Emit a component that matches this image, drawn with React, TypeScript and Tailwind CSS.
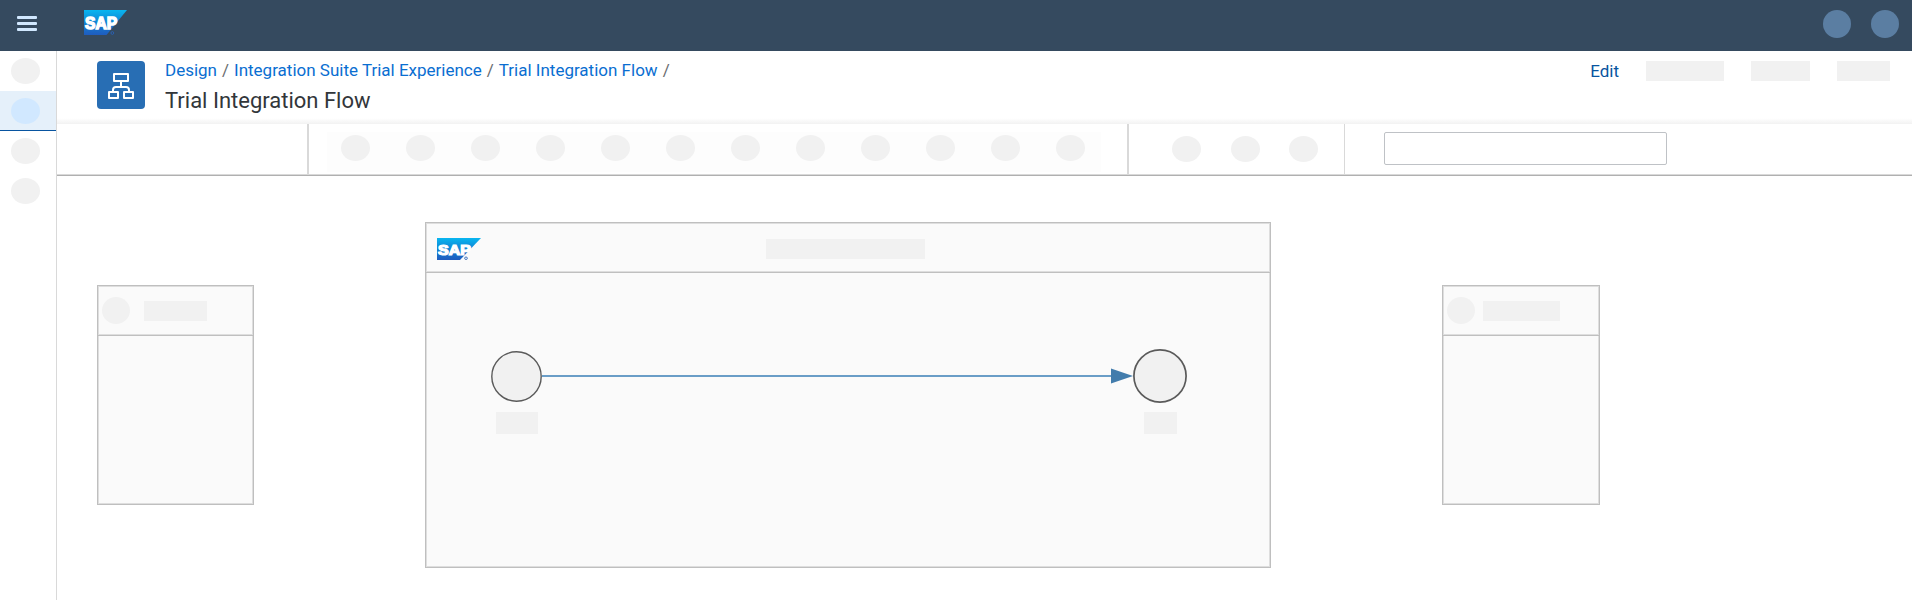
import { useId, type ReactNode } from "react";

function SapLogo({ className }: { className: string }) {
  const id = useId();
  return (
    <svg viewBox="0 0 44 25" preserveAspectRatio="none" className={className} role="img" aria-label="SAP">
      <defs>
        <linearGradient id={id} x1="0" y1="0" x2="0" y2="1">
          <stop offset="0" stopColor="#08b6f0" />
          <stop offset="0.5" stopColor="#1283d3" />
          <stop offset="1" stopColor="#1f5cbf" />
        </linearGradient>
      </defs>
      <path d="M0 0H44L23 25H0Z" fill={`url(#${id})`} />
      <text
        x="1"
        y="19"
        fontFamily="'Liberation Sans', Arial, sans-serif"
        fontWeight="700"
        fontSize="16"
        fill="#fff"
        stroke="#fff"
        strokeWidth="1.4"
      >
        SAP
      </text>
      <circle cx="29" cy="23" r="1.4" fill="none" stroke="#2a62b8" strokeWidth="0.9" />
    </svg>
  );
}

function FlowIcon() {
  return (
    <svg viewBox="0 0 48 48" className="size-12" fill="none" stroke="#fff" strokeWidth="2" strokeLinejoin="round" aria-hidden="true">
      <rect x="17" y="13" width="14" height="7" />
      <rect x="12" y="31" width="9" height="6" />
      <rect x="27" y="31" width="9" height="6" />
      <path d="M24 20V26M16 31V29Q16 26 19 26H29Q32 26 32 29V31" />
    </svg>
  );
}

function Dot() {
  return <span className="block h-[26px] w-[29px] shrink-0 rounded-[50%] bg-[#f1f1f1]" />;
}

function SideItem({ active = false }: { active?: boolean }) {
  return (
    <li
      className={
        active
          ? "flex h-10 items-center border-b border-[#0854a0] bg-[#e5f0fa] pl-[11px]"
          : "flex h-10 items-center pl-[11px]"
      }
    >
      <span
        className={
          active
            ? "block h-[26px] w-[29px] rounded-[50%] bg-[#d1e8ff]"
            : "block h-[26px] w-[29px] rounded-[50%] bg-[#f1f1f1]"
        }
      />
    </li>
  );
}

function Pool({ className, header, children }: { className: string; header: ReactNode; children?: ReactNode }) {
  return (
    <section
      className={`absolute flex flex-col border border-[#bfbfbf] bg-[#fafafa] shadow-[inset_0_0_0_1px_#dedede] ${className}`}
    >
      <div className="flex h-[50px] shrink-0 items-center border-b border-[#bfbfbf] shadow-[inset_0_0_0_1px_#dedede]">
        {header}
      </div>
      {children}
    </section>
  );
}

export default function App() {
  return (
    <div className="flex min-h-screen flex-col bg-white font-['Roboto','Liberation_Sans',sans-serif] text-[17px] leading-5">
      <header className="flex h-[51px] shrink-0 items-center bg-[#354a5f] pr-[13px] pl-[17px]">
        <button type="button" aria-label="Menu" className="-mt-1 flex w-5 flex-col gap-[3px]">
          <span className="h-[3px] rounded-[1px] bg-[#d1e8ff]" />
          <span className="h-[3px] rounded-[1px] bg-[#d1e8ff]" />
          <span className="h-[3px] rounded-[1px] bg-[#d1e8ff]" />
        </button>
        <SapLogo className="-mt-1.5 ml-[47px] h-[25px] w-[43px]" />
        <div className="-mt-1 ml-auto flex gap-5">
          <span className="size-7 rounded-full bg-[#5b7ea2]" />
          <span className="size-7 rounded-full bg-[#5b7ea2]" />
        </div>
      </header>

      <div className="flex flex-1">
        <nav aria-label="Sections" className="w-[57px] shrink-0 border-r border-[#d9d9d9]">
          <ul>
            <SideItem />
            <SideItem active />
            <SideItem />
            <SideItem />
          </ul>
        </nav>

        <div className="flex min-w-0 flex-1 flex-col">
          <div className="flex h-[73px] shrink-0 items-start bg-linear-to-b from-white from-92% to-[#f2f2f2] pt-2.5 pr-[22px] pl-10">
            <span className="rounded bg-[#286eb4]">
              <FlowIcon />
            </span>
            <div className="ml-5">
              <nav aria-label="Breadcrumb" className="flex gap-[5px] leading-[18px] whitespace-nowrap text-[#6a6d70]">
                <a href="#design" className="text-[#0a6ed1]">Design</a>
                <span>/</span>
                <a href="#package" className="text-[#0a6ed1]">Integration Suite Trial Experience</a>
                <span>/</span>
                <a href="#flow" className="text-[#0a6ed1]">Trial Integration Flow</a>
                <span>/</span>
              </nav>
              <h1 className="mt-2 text-[22px] leading-7 whitespace-nowrap text-[#32363a]">Trial Integration Flow</h1>
            </div>
            <div className="ml-auto flex items-center">
              <button type="button" className="mr-[27px] text-[#0854a0]">Edit</button>
              <div className="flex items-center gap-[27px]">
                <span className="h-5 w-[78px] bg-[#f1f1f1]" />
                <span className="h-5 w-[59px] bg-[#f1f1f1]" />
                <span className="h-5 w-[53px] bg-[#f1f1f1]" />
              </div>
            </div>
          </div>

          <div className="flex h-[52px] shrink-0 border-b border-[#b0b0b0] shadow-[inset_0_-1px_0_0_#d9d9d9]">
            <div className="w-[252px] shrink-0 border-r-2 border-[#d9d9d9]" />
            <div className="w-[820px] shrink-0 border-r-2 border-[#d9d9d9] py-2 pr-[26px] pl-[18px]">
              <div className="flex h-10 justify-between bg-[#fdfdfd] pt-[3px] pr-4 pl-3.5">
                <Dot />
                <Dot />
                <Dot />
                <Dot />
                <Dot />
                <Dot />
                <Dot />
                <Dot />
                <Dot />
                <Dot />
                <Dot />
                <Dot />
              </div>
            </div>
            <div className="flex w-[216px] shrink-0 items-start justify-between border-r border-[#d9d9d9] pt-3 pr-[26px] pl-[43px]">
              <Dot />
              <Dot />
              <Dot />
            </div>
            <div className="pt-2 pl-[39px]">
              <input
                type="text"
                aria-label="Search"
                className="block h-[33px] w-[283px] rounded-xs border border-[#bfc2c6] bg-white px-2 outline-none"
              />
            </div>
          </div>

          <main className="relative min-h-[424px] flex-1">
            <Pool
              className="top-[109px] left-[40px] h-[220px] w-[157px]"
              header={
                <div className="flex items-center gap-3.5 pl-1">
                  <span className="h-[27px] w-[28px] rounded-[50%] bg-[#f1f1f1]" />
                  <span className="h-5 w-[63px] bg-[#f1f1f1]" />
                </div>
              }
            />

            <Pool
              className="top-[46px] left-[368px] h-[346px] w-[846px]"
              header={
                <div className="grid w-full grid-cols-[1fr_auto_1fr] items-center pt-0.5 pr-4 pl-[11px]">
                  <SapLogo className="h-[22px] w-11" />
                  <span className="h-5 w-[159px] bg-[#f1f1f1]" />
                </div>
              }
            >
              <div className="flex justify-between pt-[75px] pr-[83px] pl-[65px]">
                <div className="flex shrink-0 flex-col items-center">
                  <div className="flex h-14 items-center">
                    <svg viewBox="0 0 51 51" className="size-[51px]" aria-hidden="true">
                      <circle cx="25.5" cy="25.5" r="24.7" fill="#f1f1f1" stroke="#5a5a5a" strokeWidth="1.4" />
                    </svg>
                  </div>
                  <span className="mt-2 h-[22px] w-[42px] bg-[#f1f1f1]" />
                </div>
                <div className="flex h-14 min-w-0 flex-1 items-center">
                  <span className="h-0.5 flex-1 bg-[#6a9dc7]" />
                  <svg viewBox="0 0 22 16" className="h-4 w-[22px] shrink-0" aria-hidden="true">
                    <path d="M0 0.5L22 8L0 15.5Z" fill="#427cac" />
                  </svg>
                </div>
                <div className="flex shrink-0 flex-col items-center">
                  <div className="flex h-14 items-center">
                    <svg viewBox="0 0 54 54" className="size-[54px]" aria-hidden="true">
                      <circle cx="27" cy="27" r="26.1" fill="#f1f1f1" stroke="#5a5a5a" strokeWidth="1.7" />
                    </svg>
                  </div>
                  <span className="mt-2 h-[22px] w-[33px] bg-[#f1f1f1]" />
                </div>
              </div>
            </Pool>

            <Pool
              className="top-[109px] left-[1385px] h-[220px] w-[158px]"
              header={
                <div className="flex items-center gap-2 pl-1">
                  <span className="h-[27px] w-[28px] rounded-[50%] bg-[#f1f1f1]" />
                  <span className="h-5 w-[77px] bg-[#f1f1f1]" />
                </div>
              }
            />
          </main>
        </div>
      </div>
    </div>
  );
}
